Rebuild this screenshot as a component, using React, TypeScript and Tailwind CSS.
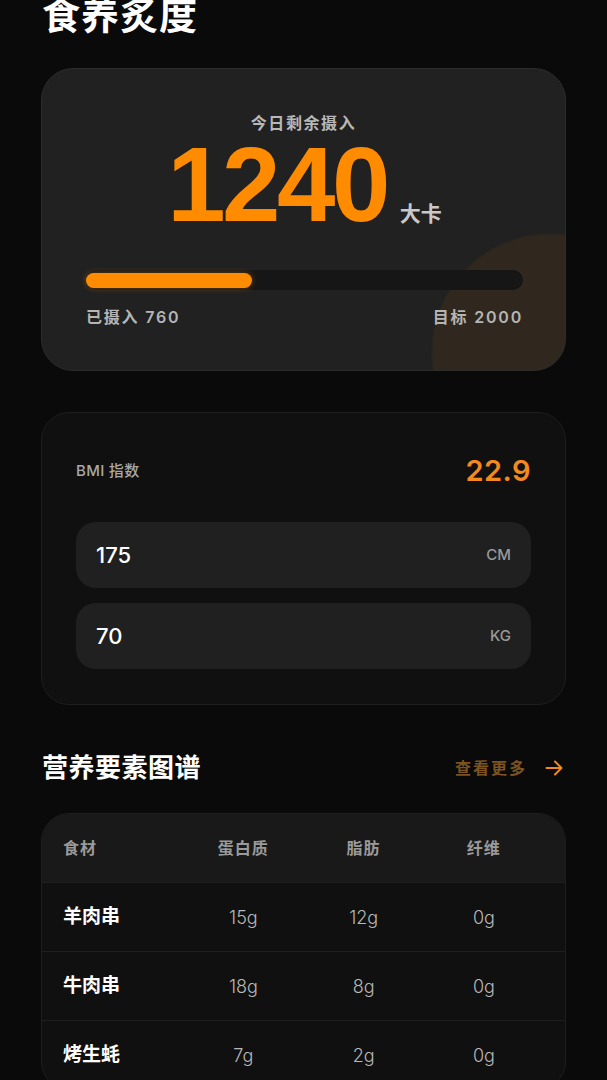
import React from "react";

const font = { fontFamily: 'Inter, "Noto Sans CJK SC", sans-serif' };

const rows = [
  { name: "羊肉串", p: "15g", f: "12g", x: "0g" },
  { name: "牛肉串", p: "18g", f: "8g", x: "0g" },
  { name: "烤生蚝", p: "7g", f: "2g", x: "0g" },
];

export default function App() {
  return (
    <div
      className="min-h-[1080px] w-[607px] overflow-hidden bg-[#0a0a0a] px-[41px] pb-10 text-white"
      style={font}
    >
      <div className="flex h-[34px] items-start pl-px">
        <h1 className="mt-[-4px] text-[38px] font-bold leading-none tracking-[1px] text-white">
          食养炙度
        </h1>
      </div>

      {/* Calorie card */}
      <div className="relative mt-[34px] h-[303px] overflow-hidden rounded-[32px] border border-[#2c2c2c] bg-[#212121]">
        <div className="absolute left-[390px] top-[165px] h-[236px] w-[236px] rounded-full bg-[#ff8c00]/[0.07] blur-[1px]" />
        <div className="relative flex flex-col items-center pt-[43px]">
          <div className="text-[16px] font-semibold leading-[22px] tracking-[1.6px] text-[#b8b8b8]">
            今日剩余摄入
          </div>
          <div className="mt-[11px] flex items-baseline pl-[2px]">
            <span
              className="text-[105px] font-bold leading-[80px] tracking-[-3.5px] text-[#ff8c00]"
              style={{ fontFamily: '"Liberation Sans", Arial, sans-serif' }}
            >
              1240
            </span>
            <span className="ml-[13px] text-[21px] font-bold leading-none text-[#c8c8c8]">
              大卡
            </span>
          </div>
        </div>
        <div className="relative ml-[44px] mr-[42px] mt-[45px]">
          <div className="relative flex h-[20px] items-center rounded-full bg-[#161616]">
            <div className="h-[15px] w-[38%] rounded-full bg-[#ff8c00] shadow-[0_0_6px_rgba(255,140,0,0.35)]" />
          </div>
          <div className="mt-[16px] flex justify-between text-[16px] font-semibold leading-[22px] tracking-[1.8px] text-[#b5b5b5]">
            <span>已摄入 760</span>
            <span>目标 2000</span>
          </div>
        </div>
      </div>

      {/* BMI card */}
      <div className="mt-[41px] rounded-[28px] border border-[#1e1e1e] bg-[#101010] px-[34px] pb-[35px] pt-[41px]">
        <div className="flex h-[34px] items-center justify-between">
          <span className="text-[15px] font-medium tracking-[0.3px] text-[#a8a8a8]">
            BMI 指数
          </span>
          <span className="text-[29px] font-semibold tracking-[0.5px] text-[#f28a1d]">
            22.9
          </span>
        </div>
        <div className="mt-[34px] flex flex-col gap-[15px]">
          {[
            { v: "175", u: "CM" },
            { v: "70", u: "KG" },
          ].map((r) => (
            <div
              key={r.u}
              className="flex h-[66px] items-center justify-between rounded-[20px] bg-[#202020] px-[20px]"
            >
              <span className="text-[22px] font-medium text-white">{r.v}</span>
              <span className="text-[15px] font-medium text-[#9a9a9a]">{r.u}</span>
            </div>
          ))}
        </div>
      </div>

      {/* Section header */}
      <div className="mt-[45px] flex h-[36px] items-center justify-between pl-px">
        <h2 className="text-[26px] font-bold leading-none tracking-[0.5px] text-white">
          营养要素图谱
        </h2>
        <div className="flex items-center gap-[18px] pr-[2px]">
          <span className="text-[16px] font-bold tracking-[2px] text-[#7d531f]">查看更多</span>
          <svg width="19" height="18" viewBox="0 0 19 18" fill="none">
            <path
              d="M1.5 9h15M10 2.5L16.5 9L10 15.5"
              stroke="#ef8a1f"
              strokeWidth="2"
              strokeLinecap="round"
              strokeLinejoin="round"
            />
          </svg>
        </div>
      </div>

      {/* Table */}
      <div className="mt-[27px] overflow-hidden rounded-[28px] border border-[#1e1e1e] bg-[#101010]">
        <div className="grid h-[68px] grid-cols-4 items-center bg-[#191919] px-[21px] text-[16px] font-bold tracking-[1px] text-[#9a9a9a]">
          <span>食材</span>
          <span className="text-center">蛋白质</span>
          <span className="text-center">脂肪</span>
          <span className="text-center">纤维</span>
        </div>
        {rows.map((r) => (
          <div
            key={r.name}
            className="grid h-[69px] grid-cols-4 items-center border-t border-[#1f1f1f] px-[21px]"
          >
            <span className="text-[19px] font-bold text-white">{r.name}</span>
            <span className="text-center text-[18px] font-light text-[#b8b8b8]">{r.p}</span>
            <span className="text-center text-[18px] font-light text-[#b8b8b8]">{r.f}</span>
            <span className="text-center text-[18px] font-light text-[#b8b8b8]">{r.x}</span>
          </div>
        ))}
      </div>
    </div>
  );
}
